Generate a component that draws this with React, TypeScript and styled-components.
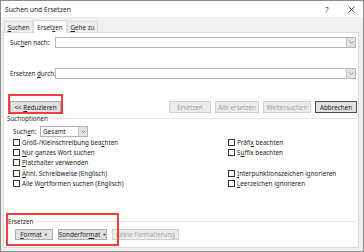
import styled, { createGlobalStyle } from "styled-components";

const GlobalStyle = createGlobalStyle`
  html, body { margin: 0; padding: 0; background: #ffffff; }
  body {
    font-family: "Noto Sans", "Open Sans", sans-serif;
    font-size: 6.3px;
    color: #1e1e1e;
  }
  * { box-sizing: border-box; }
`;

const Dialog = styled.div`
  position: relative;
  width: 364px;
  height: 252px;
  border: 1px solid #8c8c8c;
  background: #f0f0f0;
  display: flex;
  flex-direction: column;
`;

const TitleBar = styled.div`
  height: 16px;
  background: #ffffff;
  display: flex;
  align-items: center;
  padding-left: 4px;
`;

const Title = styled.span`
  flex: 1;
  font-size: 6.7px;
`;

const TitleButton = styled.span`
  width: 24px;
  height: 16px;
  display: flex;
  align-items: center;
  justify-content: center;
  font-size: 7px;
  color: #333;
`;

const Body = styled.div`
  flex: 1;
  display: flex;
  flex-direction: column;
  padding: 4px 4px 3px 2px;
`;

const TabStrip = styled.div`
  display: flex;
  align-items: flex-end;
  height: 11px;
  padding-left: 1px;
`;

const Tab = styled.div<{ $active?: boolean; $w: number }>`
  width: ${(p) => p.$w}px;
  height: ${(p) => (p.$active ? 13 : 11)}px;
  margin-bottom: ${(p) => (p.$active ? -1 : 0)}px;
  display: flex;
  align-items: center;
  justify-content: center;
  background: ${(p) => (p.$active ? "#ffffff" : "#f0f0f0")};
  border: 1px solid #d9d9d9;
  border-bottom: none;
  position: relative;
  z-index: ${(p) => (p.$active ? 1 : 0)};
`;

const Panel = styled.div`
  flex: 1;
  background: #ffffff;
  border: 1px solid #d9d9d9;
  display: flex;
  flex-direction: column;
  padding: 4px 2px 7px 6px;
`;

const FieldGrid = styled.div`
  display: grid;
  grid-template-columns: 45px 1fr;
  row-gap: 20px;
  align-items: center;
  white-space: nowrap;
`;

const Combo = styled.div<{ $w?: number }>`
  height: 11px;
  ${(p) => (p.$w ? `width: ${p.$w}px;` : "")}
  border: 1px solid #b4b4b4;
  background: #ffffff;
  display: flex;
  align-items: stretch;
  justify-content: space-between;
  padding-left: 2px;
`;

const ComboValue = styled.span`
  display: flex;
  align-items: center;
`;

const DropButton = styled.span`
  width: 9px;
  display: flex;
  align-items: center;
  justify-content: center;
  background: #e3e3e3;
  border-left: 1px solid #c4c4c4;
`;

const ButtonRow = styled.div`
  display: flex;
  align-items: center;
  gap: 4px;
  margin-top: 22px;
  margin-right: -1px;
`;

const Spacer = styled.div`
  flex: 1;
`;

const Button = styled.div<{ $w: number; $disabled?: boolean; $default?: boolean }>`
  position: relative;
  width: ${(p) => p.$w}px;
  height: 12px;
  display: flex;
  align-items: center;
  justify-content: center;
  gap: 2px;
  white-space: nowrap;
  background: ${(p) => (p.$disabled ? "#ececec" : "#e1e1e1")};
  color: ${(p) => (p.$disabled ? "#a3a3a3" : "#1e1e1e")};
  border: 1px solid
    ${(p) => (p.$disabled ? "#d0d0d0" : p.$default ? "#4d4d4d" : "#adadad")};
`;

const SmallButton = styled(Button)`
  height: 11px;
`;

const RedMark = styled.div<{ $t: number; $r: number; $b: number; $l: number }>`
  position: absolute;
  top: ${(p) => p.$t}px;
  right: ${(p) => p.$r}px;
  bottom: ${(p) => p.$b}px;
  left: ${(p) => p.$l}px;
  border: 2px solid #e8413f;
  pointer-events: none;
`;

const GroupHeader = styled.div<{ $indent: number }>`
  display: flex;
  align-items: center;
  gap: 3px;
  height: 8px;
  margin-left: ${(p) => p.$indent}px;
  &::after {
    content: "";
    flex: 1;
    border-top: 1px solid #e3e3e3;
  }
`;

const OptionsHeader = styled(GroupHeader)`
  margin-top: 1px;
`;

const ScopeRow = styled.div`
  display: flex;
  align-items: center;
  margin-top: 4px;
  padding-left: 3px;
  height: 10px;
`;

const ScopeLabel = styled.span`
  width: 27px;
`;

const CheckGrid = styled.div`
  display: grid;
  grid-template-columns: 215px 1fr;
  grid-auto-flow: column;
  grid-template-rows: repeat(5, 10.3px);
  margin-top: 1px;
  padding-left: 3px;
`;

const CheckRow = styled.div`
  display: flex;
  align-items: center;
  gap: 2px;
  white-space: nowrap;
`;

const Box = styled.span`
  width: 7px;
  height: 7px;
  border: 1px solid #333333;
  background: #ffffff;
  flex: none;
`;

const BottomSection = styled.div`
  position: relative;
  margin-top: auto;
  display: flex;
  flex-direction: column;
  gap: 4px;
`;

const FormatRow = styled.div`
  display: flex;
  gap: 5px;
  padding-left: 5px;
`;

const Key = styled.span`
  text-decoration: underline;
  text-underline-offset: 1px;
`;

const Caret = styled.span`
  font-size: 4px;
`;

function Chevron() {
  return (
    <svg width="5" height="3" viewBox="0 0 5 3">
      <polyline points="0.5,0.5 2.5,2.5 4.5,0.5" fill="none" stroke="#6d6d6d" strokeWidth="0.8" />
    </svg>
  );
}

function Check({ children }: { children: React.ReactNode }) {
  return (
    <CheckRow>
      <Box />
      <span>{children}</span>
    </CheckRow>
  );
}

export default function App() {
  return (
    <>
      <GlobalStyle />
      <Dialog>
        <TitleBar>
          <Title>Suchen und Ersetzen</Title>
          <TitleButton>?</TitleButton>
          <TitleButton>
            <svg width="7" height="7" viewBox="0 0 7 7">
              <path d="M0.5 0.5 L6.5 6.5 M6.5 0.5 L0.5 6.5" stroke="#333" strokeWidth="0.8" />
            </svg>
          </TitleButton>
        </TitleBar>
        <Body>
          <TabStrip>
            <Tab $w={29}>
              <span><Key>S</Key>uchen</span>
            </Tab>
            <Tab $w={34} $active>
              <span>Erset<Key>z</Key>en</span>
            </Tab>
            <Tab $w={31}>
              <span><Key>G</Key>ehe zu</span>
            </Tab>
          </TabStrip>
          <Panel>
            <FieldGrid>
              <span>Suc<Key>h</Key>en nach:</span>
              <Combo>
                <ComboValue />
                <DropButton>
                  <Chevron />
                </DropButton>
              </Combo>
              <span>Ersetzen <Key>d</Key>urch:</span>
              <Combo>
                <ComboValue />
                <DropButton>
                  <Chevron />
                </DropButton>
              </Combo>
            </FieldGrid>

            <ButtonRow>
              <Button $w={51}>
                <span>&lt;&lt; <Key>R</Key>eduzieren</span>
                <RedMark $t={-8} $r={-3} $b={-2} $l={-3} />
              </Button>
              <Spacer />
              <Button $w={42} $disabled>Ersetzen</Button>
              <Button $w={44} $disabled>Alle ersetzen</Button>
              <Button $w={48} $disabled>Weitersuchen</Button>
              <Button $w={42} $default>Abbrechen</Button>
            </ButtonRow>

            <OptionsHeader $indent={-3}>Suchoptionen</OptionsHeader>

            <ScopeRow>
              <ScopeLabel>Such<Key>e</Key>n:</ScopeLabel>
              <Combo $w={48}>
                <ComboValue>Gesamt</ComboValue>
                <DropButton>
                  <Chevron />
                </DropButton>
              </Combo>
            </ScopeRow>

            <CheckGrid>
              <Check>Groß-/Kleinschreibung bea<Key>c</Key>hten</Check>
              <Check><Key>N</Key>ur ganzes Wort suchen</Check>
              <Check><Key>P</Key>latzhalter verwenden</Check>
              <Check><Key>Ä</Key>hnl. Schreibweise (Englisch)</Check>
              <Check>Alle W<Key>o</Key>rtformen suchen (Englisch)</Check>
              <Check>Präfi<Key>x</Key> beachten</Check>
              <Check>S<Key>u</Key>ffix beachten</Check>
              <span />
              <Check><Key>I</Key>nterpunktionszeichen ignorieren</Check>
              <Check><Key>L</Key>eerzeichen ignorieren</Check>
            </CheckGrid>

            <BottomSection>
              <GroupHeader $indent={-2}>Ersetzen</GroupHeader>
              <FormatRow>
                <SmallButton $w={38}>
                  <span><Key>F</Key>ormat</span>
                  <Caret>▼</Caret>
                </SmallButton>
                <SmallButton $w={49}>
                  <span>Sonderfor<Key>m</Key>at</span>
                  <Caret>▼</Caret>
                </SmallButton>
                <SmallButton $w={67} $disabled>Keine Formatierung</SmallButton>
              </FormatRow>
              <RedMark $t={-4} $r={237} $b={-6} $l={-4} />
            </BottomSection>
          </Panel>
        </Body>
      </Dialog>
    </>
  );
}
